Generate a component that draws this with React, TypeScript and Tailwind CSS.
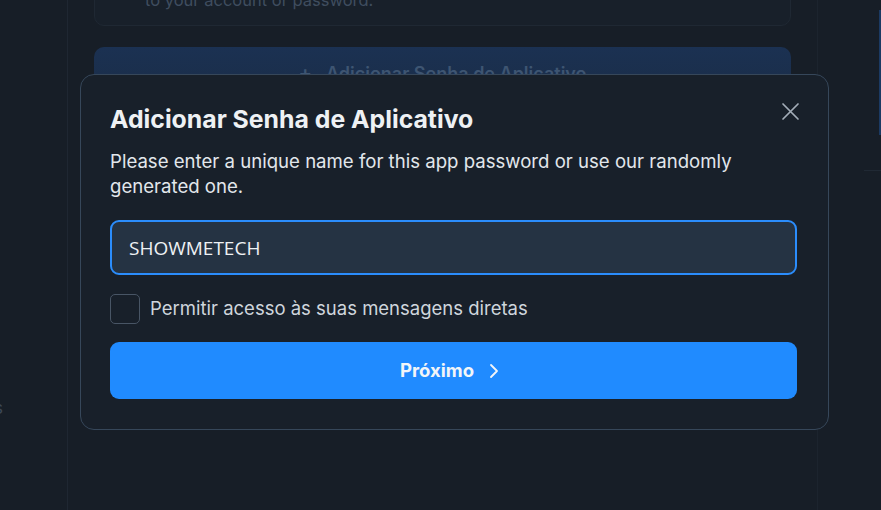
import * as React from "react";

const font = { fontFamily: "Inter, 'Noto Sans', sans-serif" };

const CloseIcon = () => (
  <svg width="19" height="19" viewBox="0 0 19 19" fill="none">
    <path d="M2 2L17 17M17 2L2 17" stroke="#a3adb8" strokeWidth="1.7" strokeLinecap="round" />
  </svg>
);

const Chevron = () => (
  <svg width="10" height="16" viewBox="0 0 10 16" fill="none">
    <path d="M2 2L8 8L2 14" stroke="#f2f5f8" strokeWidth="1.8" strokeLinecap="round" strokeLinejoin="round" />
  </svg>
);

export default function App() {
  const [name, setName] = React.useState("SHOWMETECH");
  const [allowDm, setAllowDm] = React.useState(false);

  return (
    <div className="relative h-[510px] w-full overflow-hidden bg-[#171e27]" style={font}>
      {/* page behind the dialog */}
      <div className="flex h-full">
        <div className="relative w-[68px] shrink-0 border-r border-[#1f2732]">
          <div className="mt-[396px] -ml-[6px] text-[17px] text-[#3d4856]">s</div>
        </div>
        <div className="flex w-[749px] shrink-0 flex-col px-[26px]">
          <div className="-mt-[48px] rounded-b-[10px] border border-[#1f2833] bg-[#18202a] pl-[50px] pr-4 pt-[14px] pb-[14px]">
            <p className="text-[16.5px] leading-[22px] text-[#3f4d5f]">Unauthorized access to</p>
            <p className="text-[16.5px] leading-[22px] text-[#3f4d5f]">to your account or password.</p>
          </div>
          <button className="mt-[21px] flex h-[52px] items-center justify-center gap-[14px] rounded-[10px] bg-gradient-to-b from-[#1b3152] to-[#1a2d48] text-[18px] font-semibold text-[#3e5572]">
            <span className="text-[20px]">+</span> Adicionar Senha de Aplicativo
          </button>
          <div className="mt-[23px] border-t border-[#1f2832]" />
          <div className="mt-[10px] border-t border-[#1c242e]" />
        </div>
        <div className="relative flex-1 border-l border-[#1c242e]">
          <div className="ml-[46px] mt-[170px] border-t border-[#202934]" />
          <div className="absolute right-0 top-[10px] h-[125px] w-[2px] bg-[#1b3a63]" />
        </div>
      </div>

      {/* dialog */}
      <div className="absolute left-[80px] top-[74px] w-[749px] rounded-[14px] border border-[#36475a] bg-[#18202a] pl-[29px] pr-[31px] pt-[29px] pb-[30px]">
        <button className="absolute right-[27px] top-[26px] p-[1px]">
          <CloseIcon />
        </button>
        <h2 className="text-[24.8px] font-bold leading-[30px] text-[#eef1f4]">
          Adicionar Senha de Aplicativo
        </h2>
        <p className="mt-[15px] pr-[40px] text-[18.6px] leading-[25px] text-[#e2e7ec]">
          Please enter a unique name for this app password or use our randomly generated one.
        </p>
        <input
          value={name}
          onChange={(e) => setName(e.target.value)}
          className="mt-[21px] h-[55px] w-full rounded-[9px] border-2 border-[#2b8dfc] bg-[#253343] px-[17px] text-[19px] text-[#eef1f4] outline-none"
          style={{ fontFamily: "'Open Sans', 'Noto Sans', sans-serif" }}
        />
        <label className="mt-[19px] flex cursor-pointer items-center gap-[10px]">
          <input
            type="checkbox"
            checked={allowDm}
            onChange={(e) => setAllowDm(e.target.checked)}
            className="h-[30px] w-[30px] appearance-none rounded-[5px] border border-[#485565] bg-[#18202a]"
          />
          <span className="text-[18.5px] text-[#cfd6dd]">Permitir acesso às suas mensagens diretas</span>
        </label>
        <button className="mt-[18px] flex h-[57px] w-full items-center justify-center gap-[15px] rounded-[9px] bg-[#208bff] pr-[8px] text-[18.5px] font-bold text-[#f2f5f8]">
          Próximo <Chevron />
        </button>
      </div>
    </div>
  );
}
